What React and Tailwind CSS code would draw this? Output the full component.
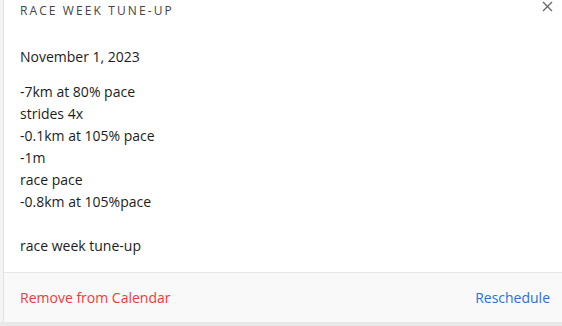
export default function App() {
  const lines = [
    "-7km at 80% pace",
    "strides 4x",
    "-0.1km at 105% pace",
    "-1m",
    "race pace",
    "-0.8km at 105%pace",
    "",
    "race week tune-up",
  ];

  return (
    <div className="flex h-[326px] w-[562px] flex-col bg-[#e8e8e8] font-['Open_Sans',sans-serif]">
      <div className="flex flex-1">
        {/* backdrop strip */}
        <div className="w-[4px] border-r border-[#e2e2e2] bg-[#f4f4f4]" />

        {/* modal */}
        <div className="flex flex-1 flex-col bg-white">
          <div className="relative pl-[16px] pr-4 pt-[3px]">
            <h3 className="text-[12px] leading-[16px] tracking-[2.1px] text-[#444] uppercase">Race week tune-up</h3>
            <button className="absolute right-[9px] top-0 text-[#666]">
              <svg width="11" height="11" viewBox="0 0 11 11" className="mt-[1px]">
                <path d="M1 1 L10 10 M10 1 L1 10" stroke="#666" strokeWidth="1.3" />
              </svg>
            </button>
          </div>

          <div className="flex-1 pl-[16px] pr-4 pt-[27px] text-[14px] text-[#1c1c1c]">
            <p className="leading-[22px]">November 1, 2023</p>
            <div className="mt-[13px] leading-[22px]">
              {lines.map((line, i) => (
                <p key={i} className="h-[22px]">{line}</p>
              ))}
            </div>
          </div>

          <div className="flex h-[50px] items-center justify-between border-t border-[#e6e6e6] bg-[#f9f9f9] pl-[16px] pr-4 text-[14px]">
            <button className="text-[#ef3b3b]">Remove from Calendar</button>
            <button className="mr-[-4px] text-[#2a6fdc]">Reschedule</button>
          </div>
        </div>
      </div>
      <div className="h-[4px]" />
    </div>
  );
}
